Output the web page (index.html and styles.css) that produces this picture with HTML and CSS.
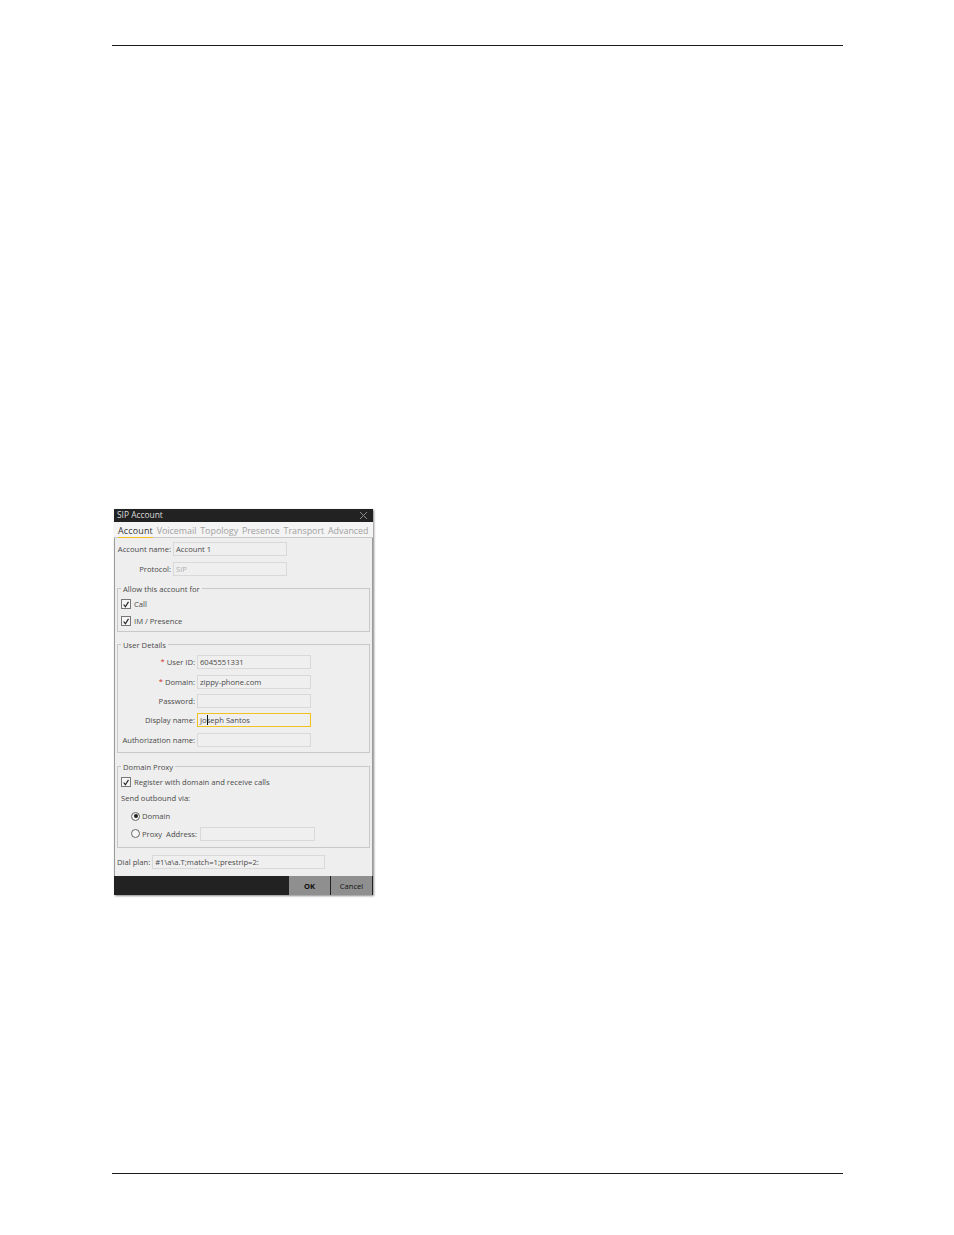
FILE: index.html
```html
<!DOCTYPE html>
<html lang="en">
<head>
<meta charset="utf-8">
<title>SIP Account</title>
<link rel="stylesheet" href="styles.css">
</head>
<body>
<div class="page">
  <hr class="rule">
  <section class="dialog">
    <header class="titlebar">
      <span>SIP Account</span>
      <svg class="close" width="9" height="9" viewBox="0 0 9 9"><path d="M1 1l7 7M8 1L1 8" stroke="#8d8d8d" stroke-width="1" fill="none"/></svg>
    </header>
    <nav class="tabs">
      <span class="tab active">Account</span>
      <span class="tab">Voicemail</span>
      <span class="tab">Topology</span>
      <span class="tab">Presence</span>
      <span class="tab">Transport</span>
      <span class="tab">Advanced</span>
    </nav>
    <div class="body">
      <div class="row top-row"><label class="lab lab-a">Account name:</label><div class="field f-a">Account 1</div></div>
      <div class="row proto-row"><label class="lab lab-a">Protocol:</label><div class="field f-a dim">SIP</div></div>

      <fieldset class="group g1">
        <legend>Allow this account for</legend>
        <div class="check c1"><span class="box"><svg width="9" height="9" viewBox="0 0 9 9"><path d="M1.8 4.5l2 2.5 3.5-5.5" stroke="#222" stroke-width="1.3" fill="none"/></svg></span>Call</div>
        <div class="check c2"><span class="box"><svg width="9" height="9" viewBox="0 0 9 9"><path d="M1.8 4.5l2 2.5 3.5-5.5" stroke="#222" stroke-width="1.3" fill="none"/></svg></span>IM / Presence</div>
      </fieldset>

      <fieldset class="group g2">
        <legend>User Details</legend>
        <div class="row r-u first"><label class="lab lab-u"><i>*</i> User ID:</label><div class="field f-u">6045551331</div></div>
        <div class="row r-u second"><label class="lab lab-u"><i>*</i> Domain:</label><div class="field f-u">zippy-phone.com</div></div>
        <div class="row r-u"><label class="lab lab-u">Password:</label><div class="field f-u"></div></div>
        <div class="row r-u tight"><label class="lab lab-u">Display name:</label><div class="field f-u focus">Jo<b class="caret"></b>seph Santos</div></div>
        <div class="row r-u"><label class="lab lab-u">Authorization name:</label><div class="field f-u"></div></div>
      </fieldset>

      <fieldset class="group g3">
        <legend>Domain Proxy</legend>
        <div class="check c3"><span class="box"><svg width="9" height="9" viewBox="0 0 9 9"><path d="M1.8 4.5l2 2.5 3.5-5.5" stroke="#222" stroke-width="1.3" fill="none"/></svg></span>Register with domain and receive calls</div>
        <div class="send">Send outbound via:</div>
        <div class="radio r1"><span class="dot on"></span>Domain</div>
        <div class="radio r2"><span class="dot"></span>Proxy&nbsp; Address:<div class="field f-p"></div></div>
      </fieldset>

      <div class="row dial"><label class="lab">Dial plan:</label><div class="field f-d">#1\a\a.T;match=1;prestrip=2:</div></div>
    </div>
    <footer class="actions">
      <span class="btn ok">OK</span>
      <span class="btn cancel">Cancel</span>
    </footer>
  </section>
  <hr class="rule bottom">
</div>
</body>
</html>
```
FILE: styles.css
```css
* { box-sizing: border-box; }
html, body { margin: 0; background: #fff; }
body { font-family: "Open Sans", "Noto Sans", sans-serif; font-size: 7.65px; color: #4a4a4a; }
.page { width: 954px; height: 1235px; padding: 45px 111px 0 112px; overflow: hidden; }
.rule { margin: 0; border: 0; height: 1px; background: #1a1a1a; }
.rule.bottom { margin-top: 278px; }
.dialog { width: 259px; height: 386px; margin: 463px 0 0 2px; background: #eee; display: flex; flex-direction: column; box-shadow: 1px 1px 2px #888; }
.titlebar { height: 13px; flex: none; background: #222; color: #ddd; font-size: 8.4px; line-height: 12px; display: flex; align-items: center; justify-content: space-between; padding: 0 5px 1px 3px; }
.close { display: block; margin-top: 1px; }
.tabs { height: 16px; flex: none; display: flex; align-items: center; gap: 3.8px; padding-left: 4px; padding-top: 1px; background: #f4f4f4; border-bottom: 1px solid #c9c9c9; font-size: 8.9px; color: #a0a0a0; white-space: nowrap; }
.tab { height: 15px; line-height: 15px; }
.tab.active { color: #333; letter-spacing: 0.2px; border-bottom: 1.5px solid #f4bf1a; }
.body { flex: 1; padding: 3.5px 2px 0; border-left: 1px solid #9a9a9a; border-right: 1px solid #9a9a9a; display: flex; flex-direction: column; }
.row { display: flex; align-items: center; }
.lab { text-align: right; white-space: nowrap; }
.lab i { color: #d0312d; font-style: normal; }
.field { height: 14px; line-height: 12px; padding-left: 2px; background: #efefef; border: 1px solid #d9d9d9; white-space: nowrap; color: #4a4a4a; position: relative; flex: none; }
.dim { color: #b0b0b0; }
.lab-a { width: 54px; margin-right: 2px; }
.f-a { width: 114px; }
.proto-row { margin-top: 6px; }
.group { margin: 0; padding: 0 0 0 3px; border: 1px solid #c8c8c8; min-width: 0; }
.group legend { padding: 0 2px; margin-left: 0; color: #4a4a4a; line-height: 10px; }
.g1 { margin-top: 8px; height: 48px; }
.g2 { margin-top: 8px; height: 113px; padding-left: 0; }
.g2 legend { margin-left: 3px; }
.g3 { margin-top: 9px; height: 86px; }
.check { display: flex; align-items: center; gap: 3px; height: 11px; }
.box { width: 10px; height: 10px; border: 1px solid #777; background: #f6f6f6; display: flex; align-items: center; justify-content: center; flex: none; }
.box svg { display: block; }
.c1 { margin-top: 5px; }
.c2 { margin-top: 6px; }
.c3 { margin-top: 5px; }
.r-u { margin-top: 5.5px; }
.r-u.first { margin-top: 5px; }
.r-u.second { margin-top: 6px; }
.r-u.tight { margin-top: 5px; }
.lab-u { width: 77px; margin-right: 2px; }
.f-u { width: 114px; }
.focus { border-color: #f2c21e; }
.caret { position: absolute; left: 9px; top: 1px; width: 1px; height: 10px; background: #111; }
.send { margin-top: 5px; height: 11px; line-height: 11px; }
.radio { display: flex; align-items: center; gap: 2px; margin-left: 10px; }
.r1 { margin-top: 7px; height: 11px; }
.r2 { margin-top: 5px; height: 14px; }
.dot { width: 9px; height: 9px; border-radius: 50%; border: 1px solid #666; background: #f6f6f6; flex: none; display: flex; align-items: center; justify-content: center; }
.dot.on::after { content: ""; width: 4px; height: 4px; border-radius: 50%; background: #222; }
.f-p { width: 115px; margin-left: 1px; }
.dial { margin-top: 7px; gap: 2px; }
.f-d { width: 173px; }
.actions { height: 19px; flex: none; background: #222; display: flex; justify-content: flex-end; gap: 1px; padding-right: 1px; }
.btn { width: 41px; background: #8f8f8f; display: flex; align-items: center; justify-content: center; color: #111; font-size: 7.6px; }
.ok { font-weight: 700; }
```
